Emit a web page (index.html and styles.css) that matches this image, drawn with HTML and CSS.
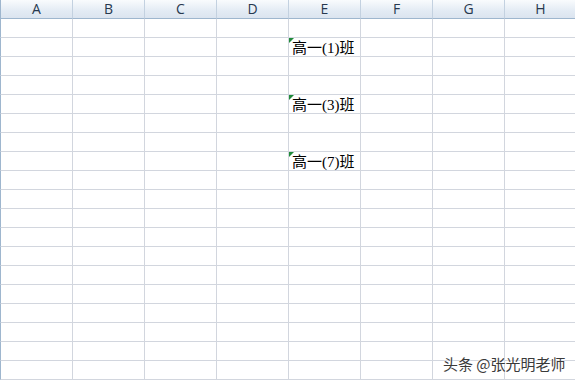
FILE: index.html
```html
<!DOCTYPE html>
<html lang="zh-CN">
<head>
    <meta charset="UTF-8">
    <meta name="viewport" content="width=device-width, initial-scale=1.0">
    <title>Sheet1</title>
    <link rel="stylesheet" href="styles.css">
</head>
<body>
    <div class="sheet">
        <div class="row head">
            <div class="cell">A</div><div class="cell">B</div><div class="cell">C</div><div class="cell">D</div>
            <div class="cell">E</div><div class="cell">F</div><div class="cell">G</div><div class="cell">H</div>
        </div>
        <div class="row"><div class="cell"></div><div class="cell"></div><div class="cell"></div><div class="cell"></div><div class="cell"></div><div class="cell"></div><div class="cell"></div><div class="cell"></div></div>
        <div class="row"><div class="cell"></div><div class="cell"></div><div class="cell"></div><div class="cell"></div><div class="cell text"><span class="flag"></span>高一(1)班</div><div class="cell"></div><div class="cell"></div><div class="cell"></div></div>
        <div class="row"><div class="cell"></div><div class="cell"></div><div class="cell"></div><div class="cell"></div><div class="cell"></div><div class="cell"></div><div class="cell"></div><div class="cell"></div></div>
        <div class="row"><div class="cell"></div><div class="cell"></div><div class="cell"></div><div class="cell"></div><div class="cell"></div><div class="cell"></div><div class="cell"></div><div class="cell"></div></div>
        <div class="row"><div class="cell"></div><div class="cell"></div><div class="cell"></div><div class="cell"></div><div class="cell text"><span class="flag"></span>高一(3)班</div><div class="cell"></div><div class="cell"></div><div class="cell"></div></div>
        <div class="row"><div class="cell"></div><div class="cell"></div><div class="cell"></div><div class="cell"></div><div class="cell"></div><div class="cell"></div><div class="cell"></div><div class="cell"></div></div>
        <div class="row"><div class="cell"></div><div class="cell"></div><div class="cell"></div><div class="cell"></div><div class="cell"></div><div class="cell"></div><div class="cell"></div><div class="cell"></div></div>
        <div class="row"><div class="cell"></div><div class="cell"></div><div class="cell"></div><div class="cell"></div><div class="cell text"><span class="flag"></span>高一(7)班</div><div class="cell"></div><div class="cell"></div><div class="cell"></div></div>
        <div class="row"><div class="cell"></div><div class="cell"></div><div class="cell"></div><div class="cell"></div><div class="cell"></div><div class="cell"></div><div class="cell"></div><div class="cell"></div></div>
        <div class="row"><div class="cell"></div><div class="cell"></div><div class="cell"></div><div class="cell"></div><div class="cell"></div><div class="cell"></div><div class="cell"></div><div class="cell"></div></div>
        <div class="row"><div class="cell"></div><div class="cell"></div><div class="cell"></div><div class="cell"></div><div class="cell"></div><div class="cell"></div><div class="cell"></div><div class="cell"></div></div>
        <div class="row"><div class="cell"></div><div class="cell"></div><div class="cell"></div><div class="cell"></div><div class="cell"></div><div class="cell"></div><div class="cell"></div><div class="cell"></div></div>
        <div class="row"><div class="cell"></div><div class="cell"></div><div class="cell"></div><div class="cell"></div><div class="cell"></div><div class="cell"></div><div class="cell"></div><div class="cell"></div></div>
        <div class="row"><div class="cell"></div><div class="cell"></div><div class="cell"></div><div class="cell"></div><div class="cell"></div><div class="cell"></div><div class="cell"></div><div class="cell"></div></div>
        <div class="row"><div class="cell"></div><div class="cell"></div><div class="cell"></div><div class="cell"></div><div class="cell"></div><div class="cell"></div><div class="cell"></div><div class="cell"></div></div>
        <div class="row"><div class="cell"></div><div class="cell"></div><div class="cell"></div><div class="cell"></div><div class="cell"></div><div class="cell"></div><div class="cell"></div><div class="cell"></div></div>
        <div class="row"><div class="cell"></div><div class="cell"></div><div class="cell"></div><div class="cell"></div><div class="cell"></div><div class="cell"></div><div class="cell"></div><div class="cell"></div></div>
        <div class="row"><div class="cell"></div><div class="cell"></div><div class="cell"></div><div class="cell"></div><div class="cell"></div><div class="cell"></div><div class="cell"></div><div class="cell"></div></div>
        <div class="row"><div class="cell"></div><div class="cell"></div><div class="cell"></div><div class="cell"></div><div class="cell"></div><div class="cell"></div><div class="cell"></div><div class="cell"></div></div>
    </div>
    <div class="watermark">头条 @张光明老师</div>
</body>
</html>
```

FILE: styles.css
```css
* {
    margin: 0;
    padding: 0;
    box-sizing: border-box;
}

body {
    width: 575px;
    height: 383px;
    overflow: hidden;
    background: #fff;
    font-family: "Liberation Serif", "Noto Sans CJK SC", serif;
}

.sheet {
    display: flex;
    flex-direction: column;
}

.row {
    display: flex;
    height: 19px;
}

.cell {
    position: relative;
    flex: 0 0 72px;
    height: 19px;
    border-left: 1px solid #d2d6de;
    border-bottom: 1px solid #d2d6de;
    font-size: 15px;
    line-height: 19px;
    color: #000;
    white-space: nowrap;
}

.cell:first-child {
    border-left: 1px solid #9eb6ce;
}

.head .cell {
    background: linear-gradient(#f9fbfd, #e3ebf4 60%, #dbe4ef);
    border-left: 1px solid #c3d1e0;
    border-bottom: 1px solid #9eb6ce;
    text-align: center;
    font-family: "Open Sans", "Liberation Sans", sans-serif;
    font-size: 14px;
    line-height: 18px;
    color: #27384f;
}

.head .cell:first-child {
    border-left: 1px solid #9eb6ce;
}

.text {
    padding-left: 3px;
    line-height: 20px;
}

.flag {
    position: absolute;
    left: 0;
    top: 0;
    border-top: 5px solid #1f8a3a;
    border-right: 5px solid transparent;
}

.watermark {
    position: absolute;
    left: 443px;
    top: 355px;
    font-family: "Noto Sans CJK SC", sans-serif;
    font-size: 15px;
    line-height: 18px;
    color: #3a3a3a;
    text-shadow: 0 0 2px #fff, 0 0 2px #fff;
}
```
